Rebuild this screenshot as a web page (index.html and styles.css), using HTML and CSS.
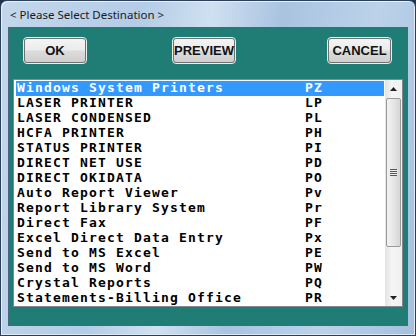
FILE: index.html
```html
<!DOCTYPE html>
<html lang="en">
<head>
  <meta charset="UTF-8" />
  <title>Please Select Destination</title>
  <link rel="stylesheet" href="styles.css">
</head>
<body>

  <div class="window">
    <div class="titlebar">&lt; Please Select Destination &gt;</div>

    <div class="client">
      <div class="buttons">
        <button class="btn btn-ok">OK</button>
        <button class="btn btn-preview">PREVIEW</button>
        <button class="btn btn-cancel">CANCEL</button>
      </div>

      <div class="listbox">
        <div class="items">
          <div class="item selected"><span class="name">Windows System Printers</span><span class="code">PZ</span></div>
          <div class="item"><span class="name">LASER PRINTER</span><span class="code">LP</span></div>
          <div class="item"><span class="name">LASER CONDENSED</span><span class="code">PL</span></div>
          <div class="item"><span class="name">HCFA PRINTER</span><span class="code">PH</span></div>
          <div class="item"><span class="name">STATUS PRINTER</span><span class="code">PI</span></div>
          <div class="item"><span class="name">DIRECT NET USE</span><span class="code">PD</span></div>
          <div class="item"><span class="name">DIRECT OKIDATA</span><span class="code">PO</span></div>
          <div class="item"><span class="name">Auto Report Viewer</span><span class="code">Pv</span></div>
          <div class="item"><span class="name">Report Library System</span><span class="code">Pr</span></div>
          <div class="item"><span class="name">Direct Fax</span><span class="code">PF</span></div>
          <div class="item"><span class="name">Excel Direct Data Entry</span><span class="code">Px</span></div>
          <div class="item"><span class="name">Send to MS Excel</span><span class="code">PE</span></div>
          <div class="item"><span class="name">Send to MS Word</span><span class="code">PW</span></div>
          <div class="item"><span class="name">Crystal Reports</span><span class="code">PQ</span></div>
          <div class="item"><span class="name">Statements-Billing Office</span><span class="code">PR</span></div>
        </div>

        <div class="scrollbar">
          <div class="arrow">
            <svg width="7" height="4" viewBox="0 0 7 4"><path d="M3.5 0 L7 4 L0 4 Z" fill="#222"/></svg>
          </div>
          <div class="track">
            <div class="thumb">
              <span class="grip"></span>
            </div>
          </div>
          <div class="arrow">
            <svg width="7" height="4" viewBox="0 0 7 4"><path d="M0 0 L7 0 L3.5 4 Z" fill="#222"/></svg>
          </div>
        </div>
      </div>
    </div>
  </div>

</body>
</html>
```

FILE: styles.css
```css
body {
  margin: 0;
  background: #1c3552;
}

.window {
  width: 416px;
  height: 336px;
  box-sizing: border-box;
  border: 1px solid #2a3f58;
  border-radius: 7px 7px 0 0;
  background: linear-gradient(100deg, #c3d7ec 0%, #b4cce6 30%, #cfe0f1 45%, #a9c3e0 60%, #bcd2ea 80%, #a5bfdc 100%);
  box-shadow: inset 1px 1px 0 #e8f1fa, inset -1px -1px 0 #dfe9f5;
  padding: 0 7px 8px 7px;
}

.titlebar {
  height: 26px;
  padding-left: 2px;
  font-family: "Noto Sans", Arial, sans-serif;
  font-size: 11.5px;
  line-height: 28px;
  color: #1a1a1a;
}

.client {
  height: 299px;
  box-sizing: border-box;
  background: #1f7d76;
  border: 1px solid #4a6580;
  padding: 10px 0 0 4px;
}

.buttons {
  display: flex;
  height: 25px;
}

.btn {
  height: 25px;
  box-sizing: border-box;
  border: 1px solid #707070;
  border-radius: 3px;
  outline: 1px solid #e8f0f0;
  background: linear-gradient(#f4f4f4 0%, #ebebeb 48%, #dcdcdc 52%, #cfcfcf 100%);
  font-family: "Liberation Sans", Arial, sans-serif;
  font-weight: bold;
  font-size: 13px;
  color: #111;
  padding: 0;
}

.btn-ok { width: 62px; margin-left: 11px; }
.btn-preview { width: 62px; margin-left: 87px; }
.btn-cancel { width: 63px; margin-left: 93px; }

.listbox {
  display: flex;
  margin: 16px 0 0 0;
  width: 390px;
  height: 228px;
  box-sizing: border-box;
  border: 1px solid #828790;
  background: #fff;
}

.items {
  flex: 1;
  padding: 1px 1px 0 2px;
}

.item {
  display: flex;
  height: 15px;
  padding-left: 1px;
  font-family: "DejaVu Sans Mono", "Liberation Mono", monospace;
  font-weight: bold;
  font-size: 13px;
  letter-spacing: 1.17px;
  line-height: 14px;
  color: #000;
  white-space: pre;
}

.item.selected {
  background: #3399ff;
  color: #fff;
}

.name {
  width: 288px;
}

.scrollbar {
  width: 17px;
  display: flex;
  flex-direction: column;
  background: linear-gradient(90deg, #e3e3e3, #f5f5f5 40%, #f0f0f0);
}

.arrow {
  height: 17px;
  display: flex;
  align-items: center;
  justify-content: center;
}

.track {
  flex: 1;
  padding: 1px 0;
}

.thumb {
  height: 147px;
  margin: 0 1px;
  border: 1px solid #9b9b9b;
  border-radius: 2px;
  background: linear-gradient(90deg, #f2f2f2, #e6e6e6 50%, #d6d6d6);
  display: flex;
  align-items: center;
  justify-content: center;
}

.grip {
  width: 7px;
  height: 7px;
  background: repeating-linear-gradient(#555 0 1px, #f0f0f0 1px 2px);
}
```
